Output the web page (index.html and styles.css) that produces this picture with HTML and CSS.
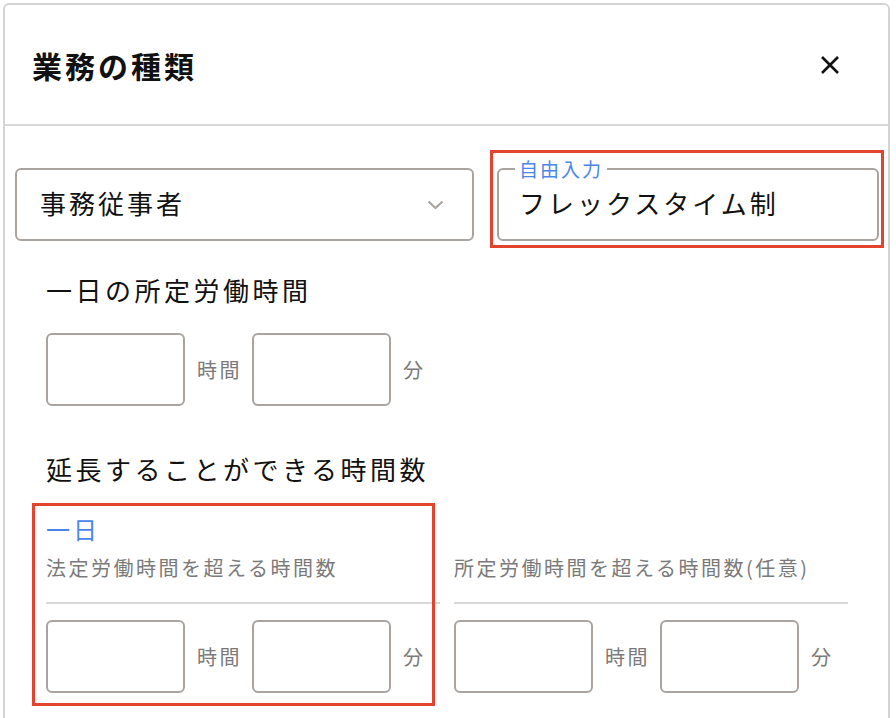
FILE: index.html
```html
<html>

<head>
    <link rel="stylesheet" href="styles.css">
</head>

<body>
<div class="panel">
    <header class="panel-header">
        <h1 class="panel-title">業務の種類</h1>
        <button class="close-btn" aria-label="閉じる">
            <svg width="20" height="20" viewBox="0 0 20 20">
                <path d="M2 2 L18 18 M18 2 L2 18" stroke="#111" stroke-width="2.6" fill="none"/>
            </svg>
        </button>
    </header>

    <div class="panel-body">
        <div class="type-row">
            <div class="select">
                <span class="select-value">事務従事者</span>
                <svg class="chevron" width="17" height="10" viewBox="0 0 17 10">
                    <path d="M1.5 1.5 L8.5 8 L15.5 1.5" stroke="#a9a4a0" stroke-width="2.2" fill="none"/>
                </svg>
            </div>
            <div class="free-input">
                <fieldset class="outlined">
                    <legend>自由入力</legend>
                    <div class="outlined-value">フレックスタイム制</div>
                </fieldset>
                <div class="mark mark-free"></div>
            </div>
        </div>

        <section class="section">
            <h2 class="section-title">一日の所定労働時間</h2>
            <div class="time-row">
                <div class="time-box"></div>
                <span class="unit">時間</span>
                <div class="time-box"></div>
                <span class="unit">分</span>
            </div>
        </section>

        <section class="section">
            <h2 class="section-title title-extend">延長することができる時間数</h2>
            <div class="limits">
                <div class="limits-title">一日</div>
                <div class="limit limit-left">
                    <p class="limit-label">法定労働時間を超える時間数</p>
                    <div class="time-row">
                        <div class="time-box"></div>
                        <span class="unit">時間</span>
                        <div class="time-box"></div>
                        <span class="unit">分</span>
                    </div>
                </div>
                <div class="limit limit-right">
                    <p class="limit-label">所定労働時間を超える時間数(任意)</p>
                    <div class="time-row">
                        <div class="time-box"></div>
                        <span class="unit">時間</span>
                        <div class="time-box"></div>
                        <span class="unit">分</span>
                    </div>
                </div>
                <div class="mark mark-day"></div>
            </div>
        </section>
    </div>
</div>
</body>

</html>
```

FILE: styles.css
```css
html,
body {
    overflow: hidden;
}

body {
    margin: 0;
    font-family: "Noto Sans CJK JP", "Noto Sans", sans-serif;
    color: #111;
    background: #fff;
}

.panel {
    margin: 3px 6px 0 3px;
    border: 2px solid #d4d4d4;
    border-radius: 6px 6px 0 0;
    padding-bottom: 60px;
}

/* header */

.panel-header {
    display: flex;
    align-items: center;
    justify-content: space-between;
    height: 119px;
    padding: 0 48px 0 27px;
    border-bottom: 2px solid #d9d9d9;
}

.panel-title {
    margin: 0;
    font-size: 30px;
    font-weight: bold;
    letter-spacing: 3px;
    line-height: 40px;
}

.close-btn {
    display: flex;
    padding: 0;
    border: none;
    background: none;
    cursor: pointer;
}

/* body */

.panel-body {
    padding: 34px 9px 0 10px;
}

.type-row {
    display: grid;
    grid-template-columns: 459px 1fr;
    column-gap: 23px;
    align-items: end;
}

.select {
    display: flex;
    align-items: center;
    justify-content: space-between;
    box-sizing: border-box;
    height: 73px;
    padding: 0 28px 3px 23px;
    border: 2px solid #a9a4a0;
    border-radius: 6px;
}

.select-value {
    font-size: 26px;
    letter-spacing: 3px;
    line-height: 36px;
}

.chevron {
    margin-top: 3px;
}

.free-input {
    position: relative;
}

.outlined {
    margin: 0;
    padding: 0 16px;
    border: 2px solid #a9a4a0;
    border-radius: 6px;
}

.outlined legend {
    padding: 0 4px;
    font-size: 19px;
    line-height: 18px;
    letter-spacing: 2px;
    color: #4a86ea;
}

.outlined-value {
    padding: 5px 0 16px 4px;
    font-size: 26px;
    line-height: 40px;
    letter-spacing: 3px;
}

/* red annotation frames */

.mark {
    border: 3px solid #e4432d;
    pointer-events: none;
}

.mark-free {
    position: absolute;
    top: -10px;
    left: -7px;
    right: -5px;
    bottom: -7px;
}

/* sections */

.section {
    padding: 0 31px;
}

.section-title {
    margin: 31px 0 0;
    font-size: 26px;
    font-weight: normal;
    letter-spacing: 3.5px;
    line-height: 36px;
}

.title-extend {
    margin-top: 45px;
}

.time-row {
    display: flex;
    align-items: center;
    margin-top: 25px;
}

.time-box {
    box-sizing: border-box;
    width: 139px;
    height: 73px;
    border: 2px solid #a9a4a0;
    border-radius: 6px;
}

.unit {
    padding: 0 10px 0 12px;
    font-size: 20px;
    letter-spacing: 2.5px;
    line-height: 28px;
    color: #7a7a7a;
}

.limits {
    display: grid;
    grid-template-columns: 394px 394px;
    column-gap: 14px;
    margin-top: 27px;
}

.limits-title {
    grid-column: 1;
    grid-row: 1;
    font-size: 24px;
    letter-spacing: 3px;
    line-height: 30px;
    color: #4a86ea;
}

.limit-left {
    grid-column: 1;
    grid-row: 2;
}

.limit-right {
    grid-column: 2;
    grid-row: 2;
}

.limit-label {
    margin: 10px 0 0;
    padding-bottom: 20px;
    border-bottom: 2px solid #d9d9d9;
    font-size: 20px;
    letter-spacing: 2.5px;
    line-height: 28px;
    color: #7a7a7a;
}

.limit .time-row {
    margin-top: 16px;
}

.mark-day {
    grid-column: 1;
    grid-row: 1 / 3;
    margin: -11px 5px -13px -14px;
}
```
